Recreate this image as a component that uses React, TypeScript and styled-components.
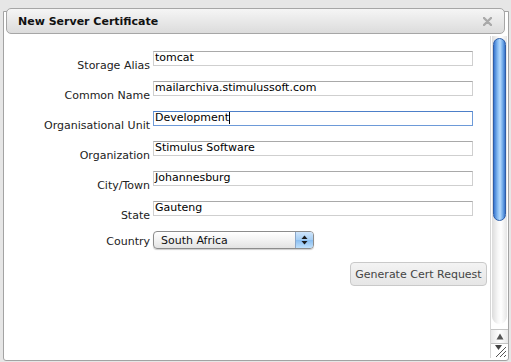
import React from 'react';
import styled, { createGlobalStyle } from 'styled-components';

const GlobalStyle = createGlobalStyle`
  html, body {
    margin: 0;
    padding: 0;
    background: #e6e6e6;
    font-family: "DejaVu Sans", Verdana, sans-serif;
  }
`;

const fields = [
  { label: 'Storage Alias', value: 'tomcat' },
  { label: 'Common Name', value: 'mailarchiva.stimulussoft.com' },
  { label: 'Organisational Unit', value: 'Development', focused: true },
  { label: 'Organization', value: 'Stimulus Software' },
  { label: 'City/Town', value: 'Johannesburg' },
  { label: 'State', value: 'Gauteng' },
];

export default function App() {
  return (
    <>
      <GlobalStyle />
      <Dialog>
        <TitleBar>
          <Title>New Server Certificate</Title>
          <CloseIcon width="9" height="9" viewBox="0 0 9 9">
            <path d="M1 1 L8 8 M8 1 L1 8" stroke="#a9a9a9" strokeWidth="2.4" strokeLinecap="round" />
          </CloseIcon>
        </TitleBar>
        <Body>
          <Content>
            <Form>
              {fields.map((f) => (
                <React.Fragment key={f.label}>
                  <Label>{f.label}</Label>
                  <Field focused={!!f.focused}>
                    {f.value}
                    {f.focused && <Caret />}
                  </Field>
                </React.Fragment>
              ))}
              <Label $center>Country</Label>
              <Select>
                <SelectText>South Africa</SelectText>
                <SelectArrows>
                  <svg width="7" height="10" viewBox="0 0 7 10">
                    <path d="M3.5 0.5 L6.5 4 L0.5 4 Z" fill="#1a1a1a" />
                    <path d="M3.5 9.5 L6.5 6 L0.5 6 Z" fill="#1a1a1a" />
                  </svg>
                </SelectArrows>
              </Select>
            </Form>
            <ButtonRow>
              <Button>Generate Cert Request</Button>
            </ButtonRow>
          </Content>
          <Scrollbar>
            <Track>
              <Thumb />
            </Track>
            <ArrowButton>
              <svg width="8" height="7" viewBox="0 0 8 7">
                <path d="M4 0.5 L7.5 6.5 L0.5 6.5 Z" fill="#555" />
              </svg>
            </ArrowButton>
            <Grip>
              <svg width="15" height="14" viewBox="0 0 15 14">
                <path d="M3 1 L10 1 L6.5 6 Z" fill="#444" />
                <path d="M4 13 L14 3 M8 13 L14 7 M12 13 L14 11" stroke="#555" strokeWidth="1" />
              </svg>
            </Grip>
          </Scrollbar>
        </Body>
      </Dialog>
    </>
  );
}

const Dialog = styled.div`
  margin: 11px 2px 0 3px;
  height: 348px;
  border: 1px solid #a3a3a3;
  border-radius: 0 0 3px 3px;
  background: #fff;
  display: flex;
  flex-direction: column;
`;

const TitleBar = styled.div`
  margin: -4px 3px 0 2px;
  height: 24px;
  border: 1px solid #a6a6a6;
  border-radius: 5px;
  background: linear-gradient(#f5f5f5, #dcdcdc);
  display: flex;
  align-items: center;
  justify-content: space-between;
  padding: 0 12px 0 11px;
`;

const Title = styled.span`
  font-size: 11px;
  font-weight: bold;
  color: #111;
`;

const CloseIcon = styled.svg`
  display: block;
`;

const Body = styled.div`
  flex: 1;
  display: flex;
  margin-top: 2px;
  min-height: 0;
`;

const Content = styled.div`
  flex: 1;
  padding-top: 15px;
`;

const Form = styled.div`
  display: grid;
  grid-template-columns: 146px 320px;
  grid-auto-rows: 15px;
  column-gap: 3px;
  row-gap: 15px;
  & > :nth-last-child(-n + 2) {
    height: 18px;
  }
`;

const Label = styled.div<{ $center?: boolean }>`
  font-size: 11px;
  line-height: 13px;
  color: #222;
  text-align: right;
  white-space: nowrap;
  padding-top: ${(p) => (p.$center ? '4px' : '8px')};
`;

const Field = styled.div<{ focused: boolean }>`
  box-sizing: border-box;
  height: 15px;
  border: 1px solid ${(p) => (p.focused ? '#6d9ad8' : '#cfcfcf')};
  border-top-color: ${(p) => (p.focused ? '#4d7fc8' : '#a9a9a9')};
  padding: 0 1px;
  font-size: 11px;
  line-height: 12px;
  color: #000;
  white-space: nowrap;
  overflow: hidden;
`;

const Caret = styled.span`
  display: inline-block;
  width: 1px;
  height: 12px;
  background: #000;
  vertical-align: top;
`;

const Select = styled.div`
  box-sizing: border-box;
  width: 161px;
  height: 18px;
  border: 1px solid #8c8c8c;
  border-radius: 4px;
  background: linear-gradient(#ffffff, #f2f2f2 50%, #e3e3e3);
  display: flex;
  align-items: center;
  overflow: hidden;
  box-shadow: 0 1px 1px rgba(0, 0, 0, 0.2);
`;

const SelectText = styled.span`
  flex: 1;
  padding-left: 7px;
  font-size: 11px;
  color: #111;
`;

const SelectArrows = styled.div`
  width: 17px;
  height: 100%;
  border-left: 1px solid #8aa6c8;
  background: linear-gradient(#cfe5fb, #a4cdf3 50%, #89bdf0 51%, #bfe0fc);
  display: flex;
  align-items: center;
  justify-content: center;
`;

const ButtonRow = styled.div`
  display: flex;
  justify-content: flex-end;
  padding-right: 3px;
  margin-top: 16px;
`;

const Button = styled.div`
  box-sizing: border-box;
  width: 137px;
  height: 24px;
  border: 1px solid #c9c9c9;
  border-radius: 4px;
  background: linear-gradient(#f3f3f3, #e6e6e6);
  font-size: 11px;
  color: #444;
  display: flex;
  align-items: center;
  justify-content: center;
`;

const Scrollbar = styled.div`
  width: 17px;
  display: flex;
  flex-direction: column;
  margin-bottom: 2px;
  border-left: 1px solid #d6d6d6;
  background: #fff;
`;

const Track = styled.div`
  flex: 1;
  margin: 0 1px 0 1px;
  border-radius: 0 0 8px 8px;
  background: linear-gradient(90deg, #dcdcdc, #f7f7f7 40%, #ffffff 60%, #e6e6e6);
  padding-top: 2px;
  margin-bottom: 5px;
`;

const Thumb = styled.div`
  height: 183px;
  margin: 0 1px;
  border-radius: 7px;
  border: 1px solid #2f5ea8;
  box-sizing: border-box;
  background: linear-gradient(90deg, #3a78d0, #8cc0f4 35%, #b5dafd 55%, #6ea8e8 80%, #3b75c9);
`;

const ArrowButton = styled.div`
  height: 13px;
  border-top: 1px solid #c4c4c4;
  border-bottom: 1px solid #c4c4c4;
  display: flex;
  align-items: center;
  justify-content: center;
  background: linear-gradient(90deg, #e8e8e8, #ffffff 50%, #e8e8e8);
`;

const Grip = styled.div`
  height: 14px;
  display: flex;
  align-items: center;
  justify-content: center;
`;
